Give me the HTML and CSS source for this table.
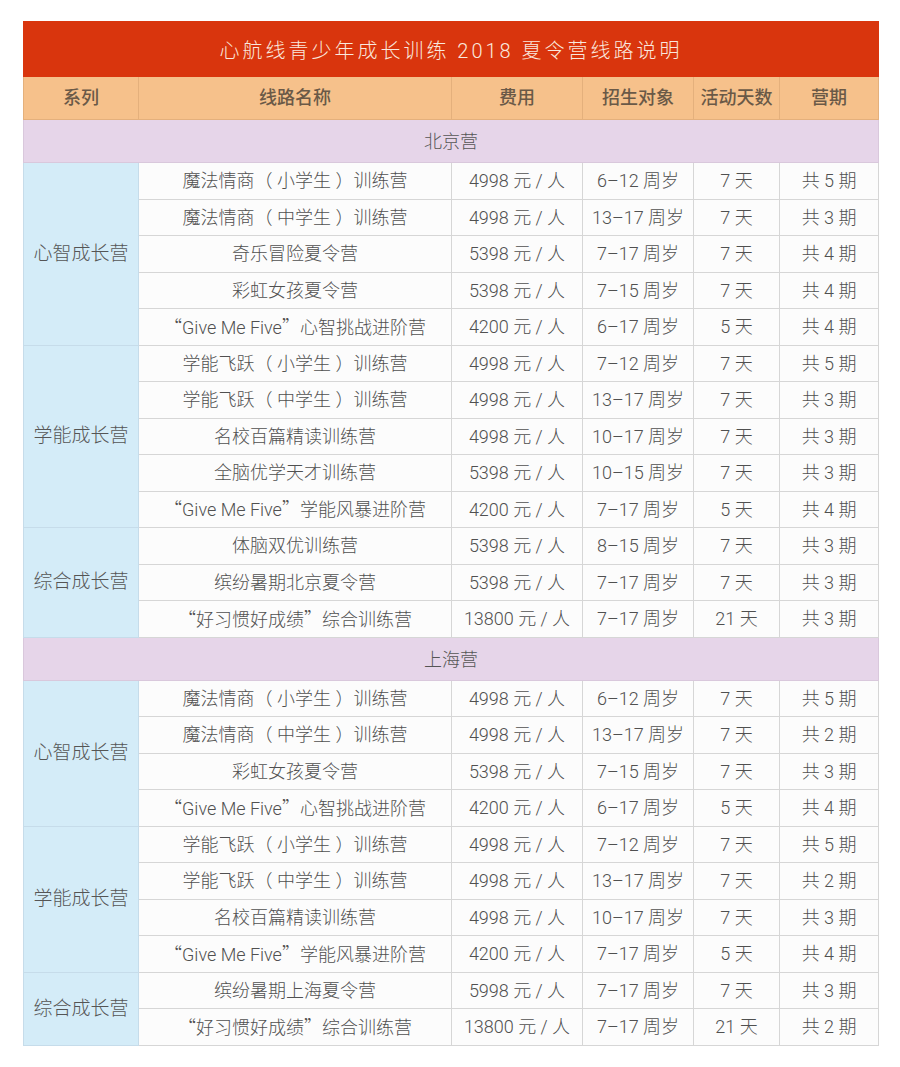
FILE: index.html
```html
<!DOCTYPE html>
<html lang="zh-CN">
<head>
<meta charset="utf-8">
<title>心航线青少年成长训练 2018 夏令营线路说明</title>
<link rel="stylesheet" href="styles.css">
</head>
<body>
<table class="routes">
  <colgroup>
    <col class="c1"><col class="c2"><col class="c3"><col class="c4"><col class="c5"><col class="c6">
  </colgroup>
  <thead>
    <tr class="title"><th colspan="6">心航线青少年成长训练 2018 夏令营线路说明</th></tr>
    <tr class="head"><th>系列</th><th>线路名称</th><th>费用</th><th>招生对象</th><th>活动天数</th><th>营期</th></tr>
  </thead>
  <tbody>
    <tr class="region"><td colspan="6">北京营</td></tr>
    <tr><td class="series" rowspan="5">心智成长营</td><td>魔法情商（ 小学生 ）训练营</td><td>4998 元 / 人</td><td>6–12 周岁</td><td>7 天</td><td>共 5 期</td></tr>
    <tr><td>魔法情商（ 中学生 ）训练营</td><td>4998 元 / 人</td><td>13–17 周岁</td><td>7 天</td><td>共 3 期</td></tr>
    <tr><td>奇乐冒险夏令营</td><td>5398 元 / 人</td><td>7–17 周岁</td><td>7 天</td><td>共 4 期</td></tr>
    <tr><td>彩虹女孩夏令营</td><td>5398 元 / 人</td><td>7–15 周岁</td><td>7 天</td><td>共 4 期</td></tr>
    <tr><td><span class="q">“</span>Give Me Five<span class="q">”</span>心智挑战进阶营</td><td>4200 元 / 人</td><td>6–17 周岁</td><td>5 天</td><td>共 4 期</td></tr>
    <tr><td class="series" rowspan="5">学能成长营</td><td>学能飞跃（ 小学生 ）训练营</td><td>4998 元 / 人</td><td>7–12 周岁</td><td>7 天</td><td>共 5 期</td></tr>
    <tr><td>学能飞跃（ 中学生 ）训练营</td><td>4998 元 / 人</td><td>13–17 周岁</td><td>7 天</td><td>共 3 期</td></tr>
    <tr><td>名校百篇精读训练营</td><td>4998 元 / 人</td><td>10–17 周岁</td><td>7 天</td><td>共 3 期</td></tr>
    <tr><td>全脑优学天才训练营</td><td>5398 元 / 人</td><td>10–15 周岁</td><td>7 天</td><td>共 3 期</td></tr>
    <tr><td><span class="q">“</span>Give Me Five<span class="q">”</span>学能风暴进阶营</td><td>4200 元 / 人</td><td>7–17 周岁</td><td>5 天</td><td>共 4 期</td></tr>
    <tr><td class="series" rowspan="3">综合成长营</td><td>体脑双优训练营</td><td>5398 元 / 人</td><td>8–15 周岁</td><td>7 天</td><td>共 3 期</td></tr>
    <tr><td>缤纷暑期北京夏令营</td><td>5398 元 / 人</td><td>7–17 周岁</td><td>7 天</td><td>共 3 期</td></tr>
    <tr><td><span class="q">“</span>好习惯好成绩<span class="q">”</span>综合训练营</td><td>13800 元 / 人</td><td>7–17 周岁</td><td>21 天</td><td>共 3 期</td></tr>
    <tr class="region"><td colspan="6">上海营</td></tr>
    <tr><td class="series" rowspan="4">心智成长营</td><td>魔法情商（ 小学生 ）训练营</td><td>4998 元 / 人</td><td>6–12 周岁</td><td>7 天</td><td>共 5 期</td></tr>
    <tr><td>魔法情商（ 中学生 ）训练营</td><td>4998 元 / 人</td><td>13–17 周岁</td><td>7 天</td><td>共 2 期</td></tr>
    <tr><td>彩虹女孩夏令营</td><td>5398 元 / 人</td><td>7–15 周岁</td><td>7 天</td><td>共 3 期</td></tr>
    <tr><td><span class="q">“</span>Give Me Five<span class="q">”</span>心智挑战进阶营</td><td>4200 元 / 人</td><td>6–17 周岁</td><td>5 天</td><td>共 4 期</td></tr>
    <tr><td class="series" rowspan="4">学能成长营</td><td>学能飞跃（ 小学生 ）训练营</td><td>4998 元 / 人</td><td>7–12 周岁</td><td>7 天</td><td>共 5 期</td></tr>
    <tr><td>学能飞跃（ 中学生 ）训练营</td><td>4998 元 / 人</td><td>13–17 周岁</td><td>7 天</td><td>共 2 期</td></tr>
    <tr><td>名校百篇精读训练营</td><td>4998 元 / 人</td><td>10–17 周岁</td><td>7 天</td><td>共 3 期</td></tr>
    <tr><td><span class="q">“</span>Give Me Five<span class="q">”</span>学能风暴进阶营</td><td>4200 元 / 人</td><td>7–17 周岁</td><td>5 天</td><td>共 4 期</td></tr>
    <tr><td class="series" rowspan="2">综合成长营</td><td>缤纷暑期上海夏令营</td><td>5998 元 / 人</td><td>7–17 周岁</td><td>7 天</td><td>共 3 期</td></tr>
    <tr><td><span class="q">“</span>好习惯好成绩<span class="q">”</span>综合训练营</td><td>13800 元 / 人</td><td>7–17 周岁</td><td>21 天</td><td>共 2 期</td></tr>
  </tbody>
</table>
</body>
</html>
```
FILE: styles.css
```css
html, body {
  margin: 0;
  padding: 0;
  background: #ffffff;
}

body {
  padding: 21px 0 0 23px;
  font-family: Roboto, "Noto Sans CJK SC", sans-serif;
  color: #555555;
}

.routes {
  border-collapse: collapse;
  table-layout: fixed;
  width: 855px;
}

.c1 { width: 115px; }
.c2 { width: 313px; }
.c3 { width: 131px; }
.c4 { width: 111px; }
.c5 { width: 86px; }
.c6 { width: 99px; }

.routes th,
.routes td {
  padding: 1px 0 0;
  text-align: center;
  vertical-align: middle;
  border: 1px solid #d6d6d6;
  font-size: 18px;
  font-weight: 300;
  white-space: nowrap;
  line-height: 1.2;
}

.routes td {
  height: 34.5px;
  background: #fcfcfc;
  color: #505050;
}

.q {
  font-family: "Noto Sans CJK SC", sans-serif;
}

.title th {
  height: 51px;
  padding-top: 3px;
  background: #d9350d;
  border-color: #d9350d;
  color: #f9e8de;
  font-size: 20px;
  letter-spacing: 3px;
}

.head th {
  height: 40px;
  padding-top: 2px;
  background: #f6c18b;
  border-color: #e4b07c;
  color: #6a5947;
  font-family: "Liberation Sans", "Noto Sans CJK SC", sans-serif;
  font-weight: 500;
  font-size: 18px;
}

.region td {
  height: 40px;
  padding-top: 2px;
  background: #e6d5e9;
  border-color: #d9c8dc;
  color: #555555;
}

.routes td.series {
  background: #d4ecf8;
  border-color: #c6dcea;
  color: #555555;
  font-size: 19px;
}
```
